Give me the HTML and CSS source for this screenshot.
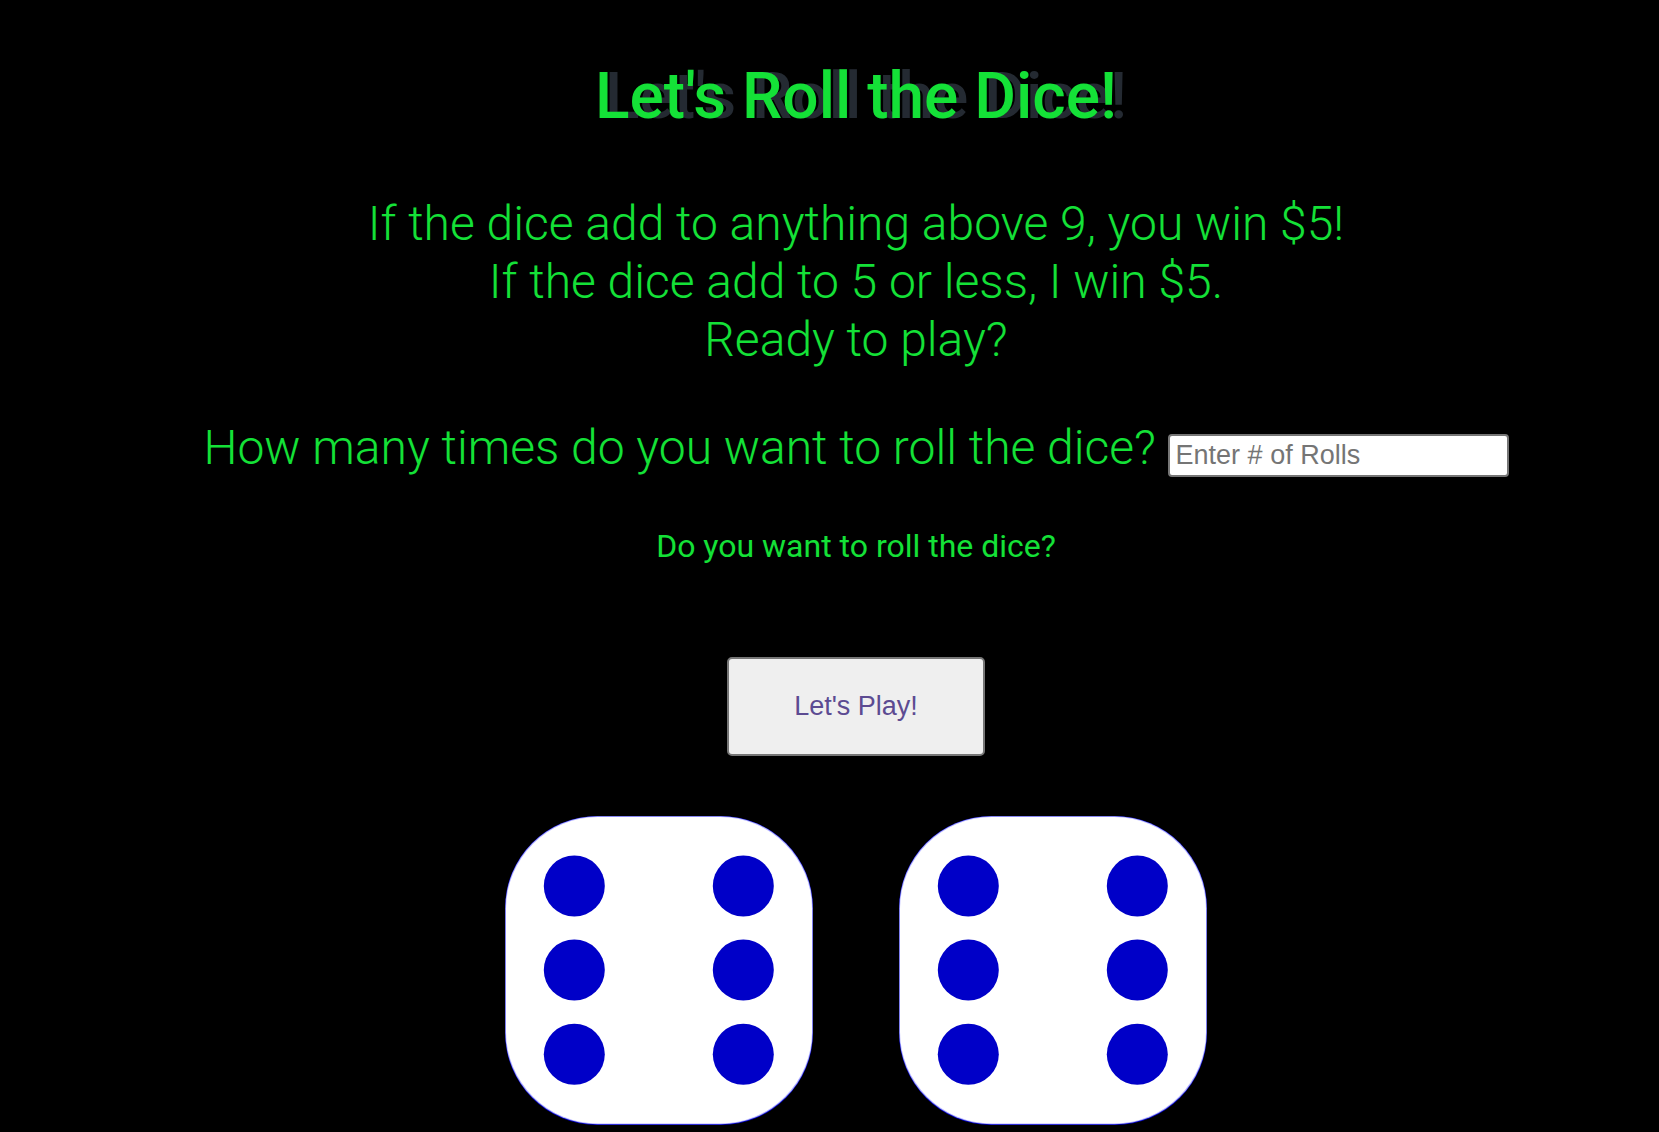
FILE: index.html
```html
<!DOCTYPE html>
<html lang="en">
<head>
<meta charset="utf-8">
<meta name="viewport" content="width=device-width, initial-scale=1">
<title>Let's Roll the Dice!</title>
<link rel="stylesheet" href="styles.css">
</head>
<body>
<main class="game">
<h1 class="title">Let's Roll the Dice!</h1>
<p class="rules">If the dice add to anything above 9, you win $5!<br>If the dice add to 5 or less, I win $5.<br>Ready to play?</p>
<div class="rolls">
<label for="rolls">How many times do you want to roll the dice?</label>
<input id="rolls" class="rolls-input" type="text" placeholder="Enter # of Rolls">
</div>
<p class="prompt">Do you want to roll the dice?</p>
<button class="play" type="button">Let's Play!</button>
<div class="dice">
<svg class="die" viewBox="0 0 308 309" role="img" aria-label="Six">
<rect class="edge" width="308" height="309" rx="92"/>
<rect class="rim" x=".3" y=".3" width="307.4" height="308" rx="92"/>
<rect class="face" x="1" y="1" width="306" height="306.5" rx="92"/>
<g class="pips"><circle cx="69.3" cy="70" r="30.5"/><circle cx="238.3" cy="70" r="30.5"/><circle cx="69.3" cy="154" r="30.5"/><circle cx="238.3" cy="154" r="30.5"/><circle cx="69.3" cy="238.3" r="30.5"/><circle cx="238.3" cy="238.3" r="30.5"/></g>
</svg>
<svg class="die" viewBox="0 0 308 309" role="img" aria-label="Six">
<rect class="edge" width="308" height="309" rx="92"/>
<rect class="rim" x=".3" y=".3" width="307.4" height="308" rx="92"/>
<rect class="face" x="1" y="1" width="306" height="306.5" rx="92"/>
<g class="pips"><circle cx="69.3" cy="70" r="30.5"/><circle cx="238.3" cy="70" r="30.5"/><circle cx="69.3" cy="154" r="30.5"/><circle cx="238.3" cy="154" r="30.5"/><circle cx="69.3" cy="238.3" r="30.5"/><circle cx="238.3" cy="238.3" r="30.5"/></g>
</svg>
</div>
</main>
</body>
</html>
```
FILE: styles.css
```css
body {
  margin: 0;
  background: #000;
  color: #14e137;
  font-family: Roboto, sans-serif;
}

.game {
  display: flex;
  flex-direction: column;
  align-items: center;
  padding: 59px 24px 4px 77px;
  text-align: center;
}

.title {
  margin: 0;
  font-size: 64px;
  line-height: 76px;
  font-weight: 500;
  text-shadow: 10px 0 #242a32;
}

.rules {
  margin: 60px 0 0;
  font-size: 48px;
  line-height: 58px;
  font-weight: 300;
}

.rolls {
  margin-top: 50px;
  font-size: 48px;
  line-height: 58px;
  font-weight: 300;
}

.rolls-input {
  box-sizing: border-box;
  width: 341px;
  height: 43px;
  padding: 2px 6px;
  border: 2px solid #767676;
  border-radius: 4px;
  font: 27px "Liberation Sans", sans-serif;
}

.prompt {
  margin: 50px 0 0;
  font-size: 32px;
  line-height: 38px;
}

.play {
  width: 258px;
  height: 99px;
  margin-top: 92px;
  border: 2px solid #767676;
  border-radius: 5px;
  background: #efefef;
  color: #5c4b92;
  font: 27px "Liberation Sans", sans-serif;
}

.dice {
  display: flex;
  gap: 86px;
  margin-top: 60px;
}

.die {
  display: block;
  width: 308px;
  height: 309px;
}

.edge {
  fill: #0000c8;
}

.rim {
  fill: #b4b4ff;
}

.face {
  fill: #fff;
}

.pips {
  fill: #0000c8;
}
```
